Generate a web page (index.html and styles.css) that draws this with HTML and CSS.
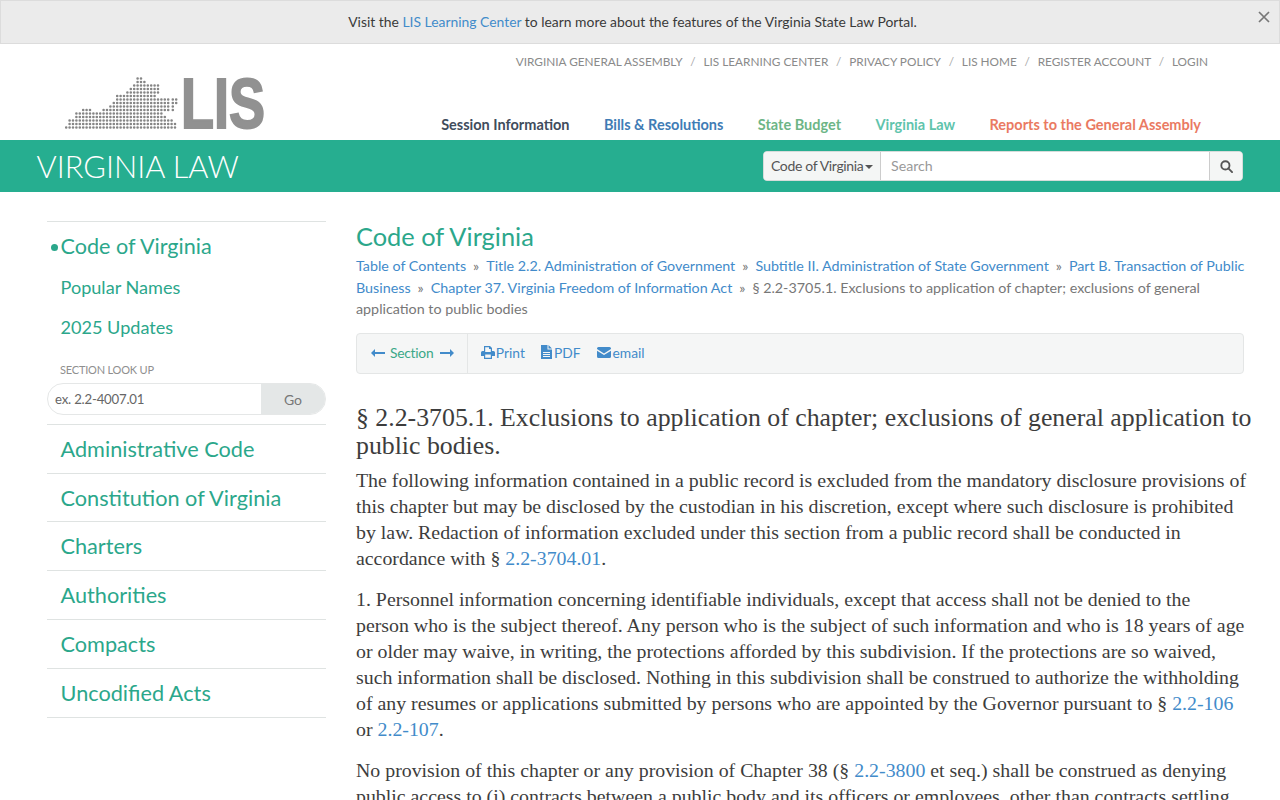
FILE: index.html
```html
<!DOCTYPE html>
<html lang="en">
<head>
<meta charset="utf-8">
<title>§ 2.2-3705.1. Virginia Law</title>
<link rel="stylesheet" href="styles.css">
</head>
<body>
<div class="alert">
  <p>Visit the <a href="#">LIS Learning Center</a> to learn more about the features of the Virginia State Law Portal.</p>
  <button class="alert-close" aria-label="Close"><svg viewBox="0 0 12 12" width="12" height="12"><path d="M1 1l10 10M11 1L1 11"/></svg></button>
</div>
<header class="masthead">
  <a class="logo" href="#" aria-label="LIS">
    <svg viewBox="60 72 210 62" width="210" height="62">
      <g class="dots">
        <path d="M137.600 78.500H144"/>
        <path d="M137.600 82H147"/>
        <path d="M134.200 85.500H160"/>
        <path d="M130.800 89H160"/>
        <path d="M127.400 92.500H160"/>
        <path d="M117.200 96H157"/>
        <path d="M117.200 99.500H169M172.800 99.500H178"/>
        <path d="M113.800 103H169M172.800 103H178"/>
        <path d="M110.400 106.500H169M172.800 106.500H175"/>
        <path d="M83.200 110H91M103.600 110H169M172.800 110H175"/>
        <path d="M76.400 113.500H164"/>
        <path d="M76.400 117H168"/>
        <path d="M69.600 120.500H172"/>
        <path d="M69.600 124H175.500"/>
        <path d="M66.200 127.500H175.500"/>
      </g>
      <text class="logo-text" x="181" y="127.500" textLength="84" lengthAdjust="spacingAndGlyphs">LIS</text>
    </svg>
  </a>
  <div class="mast-right">
    <nav class="util-nav">
      <a href="#">Virginia General Assembly</a><span>/</span>
      <a href="#">LIS Learning Center</a><span>/</span>
      <a href="#">Privacy Policy</a><span>/</span>
      <a href="#">LIS Home</a><span>/</span>
      <a href="#">Register Account</a><span>/</span>
      <a href="#">Login</a>
    </nav>
    <nav class="main-nav">
      <a class="c-session" href="#">Session Information</a>
      <a class="c-bills" href="#">Bills &amp; Resolutions</a>
      <a class="c-budget" href="#">State Budget</a>
      <a class="c-law" href="#">Virginia Law</a>
      <a class="c-reports" href="#">Reports to the General Assembly</a>
    </nav>
  </div>
</header>
<div class="band">
  <div class="band-title">VIRGINIA LAW</div>
  <form class="search">
    <button type="button" class="search-scope">Code of Virginia<i class="caret"></i></button>
    <div class="search-input">Search</div>
    <button type="button" class="search-go" aria-label="Search"><svg viewBox="0 0 14 14" width="13" height="13"><circle cx="5.8" cy="5.8" r="4.4"/><path d="M9 9l4 4"/></svg></button>
  </form>
</div>
<div class="page">
  <aside class="side">
    <div class="side-top">
      <a class="side-current" href="#">Code of Virginia</a>
      <a class="side-sub" href="#">Popular Names</a>
      <a class="side-sub" href="#">2025 Updates</a>
      <div class="lookup-label">SECTION LOOK UP</div>
      <div class="lookup">
        <div class="lookup-input">ex. 2.2-4007.01</div>
        <div class="lookup-go">Go</div>
      </div>
    </div>
    <a class="side-item" href="#">Administrative Code</a>
    <a class="side-item" href="#">Constitution of Virginia</a>
    <a class="side-item" href="#">Charters</a>
    <a class="side-item" href="#">Authorities</a>
    <a class="side-item" href="#">Compacts</a>
    <a class="side-item" href="#">Uncodified Acts</a>
  </aside>
  <main class="content">
    <h2 class="code-title">Code of Virginia</h2>
    <div class="crumbs"><a href="#">Table of Contents</a><span class="sep">»</span><a href="#">Title 2.2. Administration of Government</a><span class="sep">»</span><a href="#">Subtitle II. Administration of State Government</a><span class="sep">»</span><a href="#">Part B. Transaction of Public Business</a><span class="sep">»</span><a href="#">Chapter 37. Virginia Freedom of Information Act</a><span class="sep">»</span>§ 2.2-3705.1. Exclusions to application of chapter; exclusions of general application to public bodies</div>
    <div class="toolbar">
      <div class="tool-section">
        <svg class="ico" viewBox="0 0 14 10" width="14" height="10"><path d="M0 5l4-4v3h10v2H4v3z"/></svg>
        <span class="tool-label">Section</span>
        <svg class="ico" viewBox="0 0 14 10" width="14" height="10"><path d="M14 5l-4-4v3H0v2h10v3z"/></svg>
      </div>
      <div class="tool-links">
        <a class="tool-print" href="#"><svg class="ico" viewBox="0 0 14 13" width="14" height="13"><path fill-rule="evenodd" d="M3 0h6l2 2v3h1.500A1.500 1.500 0 0 1 14 6.500V10h-3v3H3v-3H0V6.500A1.500 1.500 0 0 1 1.500 5H3zM4.200 1.200V6h5.600V3H8V1.200zM4.200 8.500v3.300h5.600V8.500z"/></svg>Print</a>
        <a href="#"><svg class="ico" viewBox="0 0 11 14" width="11" height="14"><path fill-rule="evenodd" d="M0 0h6.500v4.500H11V14H0zM2 7v1h7V7zM2 9v1h7V9zM2 11v1h7v-1zM7.500 0L11 3.500H7.500z"/></svg>PDF</a>
        <a href="#"><svg class="ico" viewBox="0 0 14 11" width="14" height="11"><path d="M0 1.500A1.500 1.500 0 0 1 1.500 0h11A1.500 1.500 0 0 1 14 1.500v.6L7 6.500 0 2.100zM0 3.700l7 4.400 7-4.400v5.800a1.500 1.500 0 0 1-1.500 1.500h-11A1.500 1.500 0 0 1 0 9.500z"/></svg>email</a>
      </div>
    </div>
    <article class="law">
      <h3>§ 2.2-3705.1. Exclusions to application of chapter; exclusions of general application to public bodies.</h3>
      <p>The following information contained in a public record is excluded from the mandatory disclosure provisions of this chapter but may be disclosed by the custodian in his discretion, except where such disclosure is prohibited by law. Redaction of information excluded under this section from a public record shall be conducted in accordance with § <a href="#">2.2-3704.01</a>.</p>
      <p>1. Personnel information concerning identifiable individuals, except that access shall not be denied to the<br>person who is the subject thereof. Any person who is the subject of such information and who is 18 years of age<br>or older may waive, in writing, the protections afforded by this subdivision. If the protections are so waived,<br>such information shall be disclosed. Nothing in this subdivision shall be construed to authorize the withholding<br>of any resumes or applications submitted by persons who are appointed by the Governor pursuant to § <a href="#">2.2-106</a><br>or <a href="#">2.2-107</a>.</p>
      <p>No provision of this chapter or any provision of Chapter 38 (§ <a href="#">2.2-3800</a> et seq.) shall be construed as denying public access to (i) contracts between a public body and its officers or employees, other than contracts settling public employee employment disputes held confidential as personnel records under subdivision 1.</p>
    </article>
  </main>
</div>
</body>
</html>
```
FILE: styles.css
```css
* { box-sizing: border-box; }
html, body { margin: 0; padding: 0; }
body { font-family: Lato, sans-serif; color: #333; background: #fff; height: 800px; overflow: hidden; }
a { text-decoration: none; color: #428bca; }
p { margin: 0; }

.alert { height: 44px; background: #ebebeb; border: 1px solid #dcdcdc; display: flex; align-items: center; justify-content: center; position: relative; font-size: 13.9px; color: #3a3a3a; padding: 0 15px 1px 0; }
.alert-close { position: absolute; right: 9px; top: 10px; border: 0; background: none; padding: 0; width: 12px; height: 12px; line-height: 0; }
.alert-close svg path { stroke: #777; stroke-width: 1.7; fill: none; }

.masthead { height: 96px; display: flex; justify-content: space-between; position: relative; }
.logo { display: block; margin: 28px 0 0 60px; height: 62px; }
.dots path { stroke: #858585; stroke-width: 2.6; stroke-linecap: round; stroke-dasharray: 0 3.4; fill: none; }
.logo-text { font-family: "Liberation Sans Narrow", "Liberation Sans", sans-serif; font-weight: 700; font-size: 70px; fill: #919191; stroke: #919191; stroke-width: 2; }
.mast-right { display: flex; flex-direction: column; align-items: flex-end; padding-right: 72px; }
.util-nav { display: flex; align-items: center; margin-top: 10px; height: 15px; font-size: 11.8px; text-transform: uppercase; color: #8f8f8f; }
.util-nav a { color: #8a8a8a; }
.util-nav span { margin: 0 7.75px; color: #aaa; }
.main-nav { display: flex; gap: 34.4px; margin-top: 47px; margin-right: 7px; font-size: 14.5px; font-weight: 700; line-height: 17px; }
.c-session { color: #3f4c5c; }
.c-bills { color: #3f7cb5; }
.c-budget { color: #6db586; }
.c-law { color: #5fc4ac; }
.c-reports { color: #ea7a62; }

.band { height: 52px; background: #26ae90; display: flex; justify-content: space-between; align-items: center; padding: 0 37px 0 36.5px; }
.band-title { font-size: 30.8px; font-weight: 300; color: #fff; line-height: 52px; padding-top: 2px; }
.search { width: 480px; height: 30px; display: flex; border-radius: 4px; overflow: hidden; background: #fff; margin-top: 0; border: 1px solid #d6dcda; }
.search-scope { width: 117px; border: 0; border-right: 1px solid #ccc; background: #f4f6f5; font: 14px Lato, sans-serif; color: #555; padding: 0 0 2px 7px; text-align: left; letter-spacing: -0.35px; white-space: nowrap; }
.caret { display: inline-block; width: 0; height: 0; border-left: 4px solid transparent; border-right: 4px solid transparent; border-top: 4px solid #555; margin-left: 2px; vertical-align: 2px; }
.search-input { flex: 1; font-size: 14.2px; color: #999; line-height: 28px; padding-left: 10px; }
.search-go { width: 33px; border: 0; border-left: 1px solid #ccc; background: #f4f6f5; padding: 0; line-height: 0; }
.search-go svg { fill: none; stroke: #555; stroke-width: 2; stroke-linecap: round; }

.page { display: flex; padding: 29px 30px 0 47px; gap: 30px; }
.side { width: 279px; flex: none; }
.side-top { border-top: 1px solid #dfe3e2; padding-top: 9px; height: 204px; border-bottom: 1px solid #dfe3e2; }
.side a { display: block; color: #2ba78b; }
.side-current { font-size: 21.6px; line-height: 30px; padding-left: 13.5px; position: relative; }
.side-current::before { content: ""; position: absolute; left: 3.5px; top: 13px; width: 7px; height: 7px; border-radius: 50%; background: #2ba78b; }
.side-sub { font-size: 18.1px; line-height: 22px; padding-left: 13.5px; margin-top: 18px; }
.side-top .side-current + .side-sub { margin-top: 15px; }
.lookup-label { font-size: 11px; color: #8f8f8f; margin: 25px 0 0 13px; line-height: 14px; letter-spacing: -0.2px; }
.lookup { display: flex; height: 32px; margin-top: 6px; border: 1px solid #e5e7e7; border-radius: 16px; overflow: hidden; }
.lookup-input { flex: 1; font-size: 13.2px; color: #666; line-height: 30px; padding-left: 7px; letter-spacing: -0.2px; }
.lookup-go { width: 64px; background: #e4e7e7; text-align: center; color: #777; font-size: 14px; line-height: 31px; }
.side-item { font-size: 21.7px; line-height: 48px; height: 48.7px; padding-left: 13.5px; border-bottom: 1px solid #dfe3e2; }
.side-item:nth-last-child(2) { height: 49.4px; }
.side-item:last-child { height: 49px; }

.content { flex: 1; min-width: 0; width: 894px; }
.code-title { font-size: 25.4px; font-weight: 400; color: #2ba78b; margin: 0 0 1px; line-height: 30px; }
.crumbs { font-size: 14.3px; line-height: 21.5px; color: #777; margin-top: 4px; }
.crumbs .sep { margin: 0 7px; color: #777; }
.toolbar { width: 888px; height: 41px; margin-top: 13px; background: #f5f6f6; border: 1px solid #e4e6e6; border-radius: 4px; display: flex; align-items: center; font-size: 13.8px; line-height: 17px; }
.tool-section { display: flex; align-items: center; gap: 5px; height: 100%; padding: 0 13px 1px 14px; border-right: 1px solid #e4e6e6; color: #3ba888; }
.tool-label { letter-spacing: -0.25px; margin-right: 1.5px; }
.tool-links { display: flex; gap: 16px; padding: 0 0 2px 13px; }
.tool-links a { display: flex; align-items: center; gap: 2px; }
.tool-links .tool-print { gap: 1px; }
.ico { fill: #428bca; flex: none; }

.law { margin-top: 30px; font-family: "Liberation Serif", serif; color: #3d3d3d; }
.law h3 { font-size: 25.8px; font-weight: 400; line-height: 28px; margin: 0 -8px 7px 0; color: #3d3d3d; }
.law p { font-size: 19.85px; line-height: 26px; margin-bottom: 15px; }
```
